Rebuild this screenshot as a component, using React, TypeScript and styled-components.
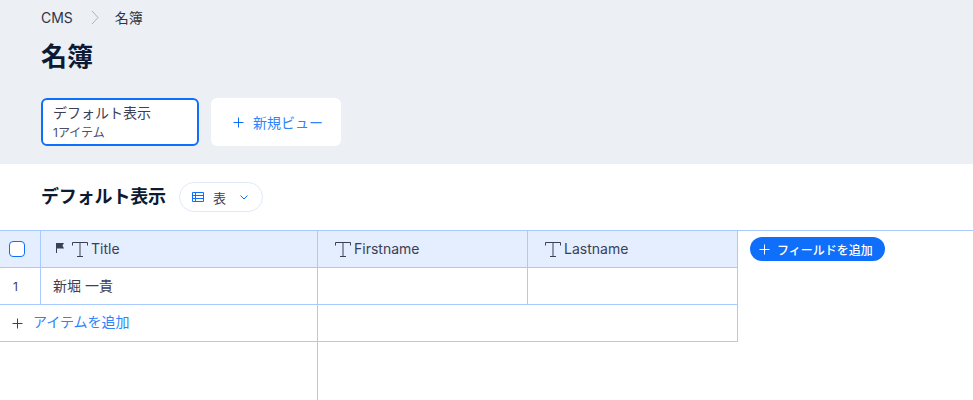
import React from 'react'
import styled, { createGlobalStyle } from 'styled-components'

const Global = createGlobalStyle`
  html, body { margin: 0; padding: 0; background: #fff; }
  body { font-family: "Inter", "Noto Sans CJK JP", sans-serif; color: #162d3d; }
`

const LINE = '#a8caff'
const BLUE = '#0f6ffa'
const LINK = '#2f83fb'

function PlusIcon({ color, size = 11 }: { color: string; size?: number }) {
  return (
    <svg width={size} height={size} viewBox="0 0 11 11" fill="none">
      <path d="M5.5 0.5v10M0.5 5.5h10" stroke={color} strokeWidth="1" />
    </svg>
  )
}

function TextIcon() {
  return (
    <svg width="16" height="15" viewBox="0 0 16 15" fill="none">
      <path d="M0.5 3.5V0.5H15.5V3.5M8 0.5V14.5M5 14.5H11" stroke="#3b4057" strokeWidth="1" />
    </svg>
  )
}

function TableIcon() {
  return (
    <svg width="12" height="10" viewBox="0 0 12 10" fill="none">
      <path d="M0.5 0.5H11.5V9.5H0.5ZM0.5 3.5H11.5M0.5 6.5H11.5M3.5 0.5V9.5" stroke={BLUE} strokeWidth="1" />
    </svg>
  )
}

function App() {
  return (
    <Page>
      <Global />
      <Header>
        <Crumbs>
          <span>CMS</span>
          <CrumbArrow width="8" height="15" viewBox="0 0 8 15" fill="none">
            <path d="M1 1L7 7.5L1 14" stroke="#a9b4c2" strokeWidth="1" />
          </CrumbArrow>
          <span>名簿</span>
        </Crumbs>
        <PageTitle>名簿</PageTitle>
        <Views>
          <ViewCard>
            <ViewName>デフォルト表示</ViewName>
            <ViewCount>1アイテム</ViewCount>
          </ViewCard>
          <NewView>
            <PlusIcon color={BLUE} />
            新規ビュー
          </NewView>
        </Views>
      </Header>
      <TitleRow>
        <SectionTitle>デフォルト表示</SectionTitle>
        <Pill>
          <TableIcon />
          <PillText>表</PillText>
          <svg width="8" height="5" viewBox="0 0 8 5" fill="none">
            <path d="M0.5 0.5L4 4L7.5 0.5" stroke={BLUE} strokeWidth="1" />
          </svg>
        </Pill>
      </TitleRow>
      <TableArea>
        <Frozen>
          <HeadRow>
            <CheckCell $head>
              <Check />
            </CheckCell>
            <TitleHead>
              <FlagSvg width="8" height="10" viewBox="0 0 8 10" fill="none">
                <path d="M0 0H8L6.5 2.5L8 5.5H1V10H0V0Z" fill="#3b4057" />
              </FlagSvg>
              <TextIcon />
              <HeadLabel>Title</HeadLabel>
            </TitleHead>
          </HeadRow>
          <BodyRow>
            <CheckCell>1</CheckCell>
            <NameCell>新堀 一貴</NameCell>
          </BodyRow>
          <AddItem>
            <PlusIcon color="#3b4057" />
            <AddLabel>アイテムを追加</AddLabel>
          </AddItem>
        </Frozen>
        <Columns>
          <HeadRow>
            <FieldHead>
              <TextIcon />
              <HeadLabel>Firstname</HeadLabel>
            </FieldHead>
            <FieldHead>
              <TextIcon />
              <HeadLabel>Lastname</HeadLabel>
            </FieldHead>
          </HeadRow>
          <BodyRow>
            <FieldCell />
            <FieldCell />
          </BodyRow>
          <EmptyAdd />
        </Columns>
        <AddField>
          <PlusIcon color="#fff" />
          フィールドを追加
        </AddField>
      </TableArea>
    </Page>
  )
}

export default App

const Page = styled.div`
  width: 973px;
  height: 400px;
  display: flex;
  flex-direction: column;
  overflow: hidden;
`

const Header = styled.header`
  height: 164px;
  box-sizing: border-box;
  padding: 9px 0 0 41px;
  background: #eceff4;
`

const Crumbs = styled.nav`
  height: 17px;
  display: flex;
  align-items: center;
  font-size: 14px;
  line-height: 17px;
  color: #2f3549;
`

const CrumbArrow = styled.svg`
  margin: 0 16px 0 18px;
`

const PageTitle = styled.h1`
  margin: 10px 0 0;
  height: 42px;
  font-size: 26px;
  line-height: 42px;
  font-weight: 700;
  color: #0c1a33;
`

const Views = styled.div`
  margin-top: 20px;
  display: flex;
  gap: 12px;
`

const ViewCard = styled.div`
  width: 158px;
  height: 48px;
  box-sizing: border-box;
  padding: 3px 0 0 10px;
  background: #fff;
  border: 2px solid ${BLUE};
  border-radius: 6px;
`

const ViewName = styled.div`
  font-size: 14px;
  line-height: 20px;
  color: #3b4057;
`

const ViewCount = styled.div`
  margin-top: 2px;
  font-size: 12px;
  line-height: 16px;
  color: #4a5068;
`

const NewView = styled.div`
  width: 130px;
  height: 48px;
  box-sizing: border-box;
  padding-left: 22px;
  display: flex;
  align-items: center;
  gap: 9px;
  background: #fff;
  border-radius: 6px;
  font-size: 14px;
  color: ${LINK};
`

const TitleRow = styled.div`
  height: 66px;
  box-sizing: border-box;
  padding: 18px 0 0 41px;
  display: flex;
  align-items: flex-start;
  gap: 13px;
`

const SectionTitle = styled.h2`
  margin: 0;
  height: 30px;
  font-size: 18px;
  line-height: 30px;
  font-weight: 700;
  letter-spacing: -0.15px;
  color: #0c1a33;
`

const Pill = styled.div`
  width: 84px;
  height: 30px;
  box-sizing: border-box;
  padding-left: 12px;
  display: flex;
  align-items: center;
  background: #fff;
  border: 1px solid #dfe9f9;
  border-radius: 15px;
`

const PillText = styled.span`
  margin: 0 14px 0 9px;
  font-size: 13px;
  color: #3b4057;
`

const TableArea = styled.div`
  flex: 1;
  display: flex;
  align-items: stretch;
  border-top: 1px solid ${LINE};
`

const Frozen = styled.div`
  width: 318px;
  box-sizing: border-box;
  border-right: 1px solid ${LINE};
`

const Columns = styled.div`
  width: 420px;
  align-self: flex-start;
`

const HeadRow = styled.div`
  height: 37px;
  box-sizing: border-box;
  display: flex;
  background: #e4eefe;
  border-bottom: 1px solid ${LINE};
`

const BodyRow = styled.div`
  height: 37px;
  box-sizing: border-box;
  display: flex;
  border-bottom: 1px solid ${LINE};
`

const CheckCell = styled.div<{ $head?: boolean }>`
  width: 41px;
  flex: none;
  box-sizing: border-box;
  padding-left: ${p => (p.$head ? '9px' : '13px')};
  display: flex;
  align-items: center;
  border-right: 1px solid ${LINE};
  font-size: 12px;
  color: #3b4057;
`

const Check = styled.div`
  width: 16px;
  height: 16px;
  box-sizing: border-box;
  background: #fff;
  border: 1px solid ${BLUE};
  border-radius: 4px;
`

const TitleHead = styled.div`
  flex: 1;
  padding-left: 15px;
  display: flex;
  align-items: center;
`

const FlagSvg = styled.svg`
  margin: -2px 8px 0 0;
`

const HeadLabel = styled.span`
  margin-left: 3px;
  padding-bottom: 2px;
  font-size: 14px;
  color: #3b4057;
`

const NameCell = styled.div`
  flex: 1;
  padding: 0 0 2px 12px;
  display: flex;
  align-items: center;
  font-size: 14px;
  color: #3b4057;
`

const AddItem = styled.div`
  height: 37px;
  box-sizing: border-box;
  padding-left: 12px;
  display: flex;
  align-items: center;
  gap: 10px;
  border-bottom: 1px solid ${LINE};
`

const AddLabel = styled.span`
  padding-bottom: 5px;
  font-size: 14px;
  color: ${LINK};
`

const FieldHead = styled.div`
  width: 210px;
  box-sizing: border-box;
  padding-left: 17px;
  display: flex;
  align-items: center;
  border-right: 1px solid ${LINE};
`

const FieldCell = styled.div`
  width: 210px;
  box-sizing: border-box;
  border-right: 1px solid ${LINE};
`

const EmptyAdd = styled.div`
  height: 37px;
  box-sizing: border-box;
  border-right: 1px solid ${LINE};
  border-bottom: 1px solid ${LINE};
`

const AddField = styled.div`
  align-self: flex-start;
  width: 135px;
  height: 24px;
  margin: 6px 0 0 12px;
  box-sizing: border-box;
  padding-left: 9px;
  display: flex;
  align-items: center;
  gap: 7px;
  background: ${BLUE};
  border-radius: 12px;
  font-size: 12px;
  font-weight: 500;
  color: #fff;
`
